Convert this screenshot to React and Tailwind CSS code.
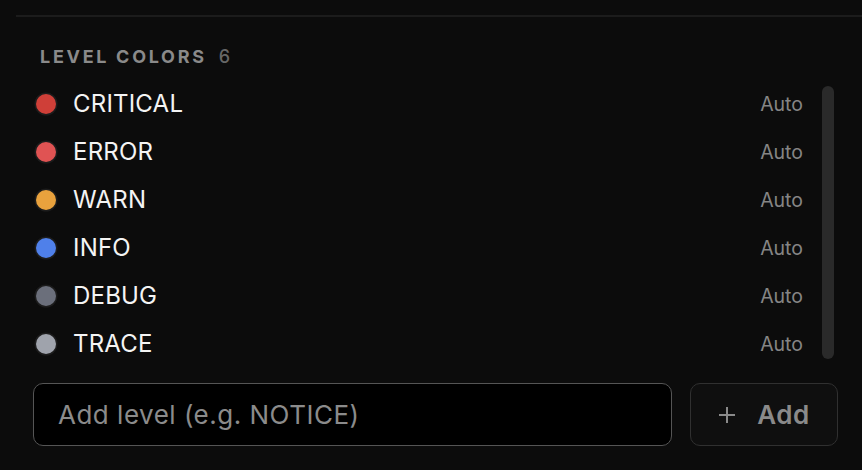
import React from "react";

const levels = [
  { name: "CRITICAL", color: "bg-[#cf3f38]" },
  { name: "ERROR", color: "bg-[#e05353]" },
  { name: "WARN", color: "bg-[#e9a23d]" },
  { name: "INFO", color: "bg-[#4f80ea]" },
  { name: "DEBUG", color: "bg-[#6b6f7b]" },
  { name: "TRACE", color: "bg-[#9fa3ac]" },
];

export default function App() {
  return (
    <div
      className="w-[862px] h-[470px] bg-[#0c0c0c] overflow-hidden flex flex-col"
      style={{ fontFamily: "Inter, 'Noto Sans', sans-serif" }}
    >
      <div className="ml-[16px] mt-[15px] h-[2px] bg-[#1c1c1c]" />
      <div className="pl-[33px] pr-[24px] flex flex-col">
        <div className="mt-[28px] pl-[7px] flex items-baseline gap-[12px] text-[18px] leading-[24px]">
          <span className="font-bold tracking-[2.7px] text-[#8a8a8a]">LEVEL COLORS</span>
          <span className="text-[#676767] font-medium">6</span>
        </div>
        <div className="mt-[11px] flex">
          <div className="flex-1 flex flex-col">
            {levels.map((l) => (
              <div key={l.name} className="h-[48px] flex items-center pl-[3px]">
                <span className={`w-[20px] h-[20px] rounded-full ring-[1.5px] ring-[#1c1c1c] ${l.color}`} />
                <span className="ml-[17px] text-[24px] leading-[28px] text-[#f4f4f4] tracking-[0.2px]">{l.name}</span>
                <span className="ml-auto text-[19.5px] leading-[24px] text-[#858585]">Auto</span>
              </div>
            ))}
          </div>
          <div className="ml-[19px] mr-[4px] mt-[6px] mb-[9px] w-[12px] rounded-full bg-[#2a2a2a]" />
        </div>
        <div className="mt-[15px] flex gap-[18px] h-[63px]">
          <div className="flex-1 rounded-[10px] border-[1.5px] border-[#555555] bg-black flex items-center pl-[24px]">
            <span className="text-[26px] leading-[30px] tracking-[0.5px] text-[#8b8b8b]">Add level (e.g. NOTICE)</span>
          </div>
          <div className="w-[148px] rounded-[10px] border-[1.5px] border-[#303030] bg-[#0f0f0f] flex items-center justify-center gap-[21px]">
            <svg width="18" height="18" viewBox="0 0 18 18" className="shrink-0">
              <path d="M9 1v16M1 9h16" stroke="#8a8a8a" strokeWidth="2" />
            </svg>
            <span className="text-[26px] leading-[30px] font-semibold tracking-[0.5px] text-[#8a8a8a]">Add</span>
          </div>
        </div>
      </div>
    </div>
  );
}
